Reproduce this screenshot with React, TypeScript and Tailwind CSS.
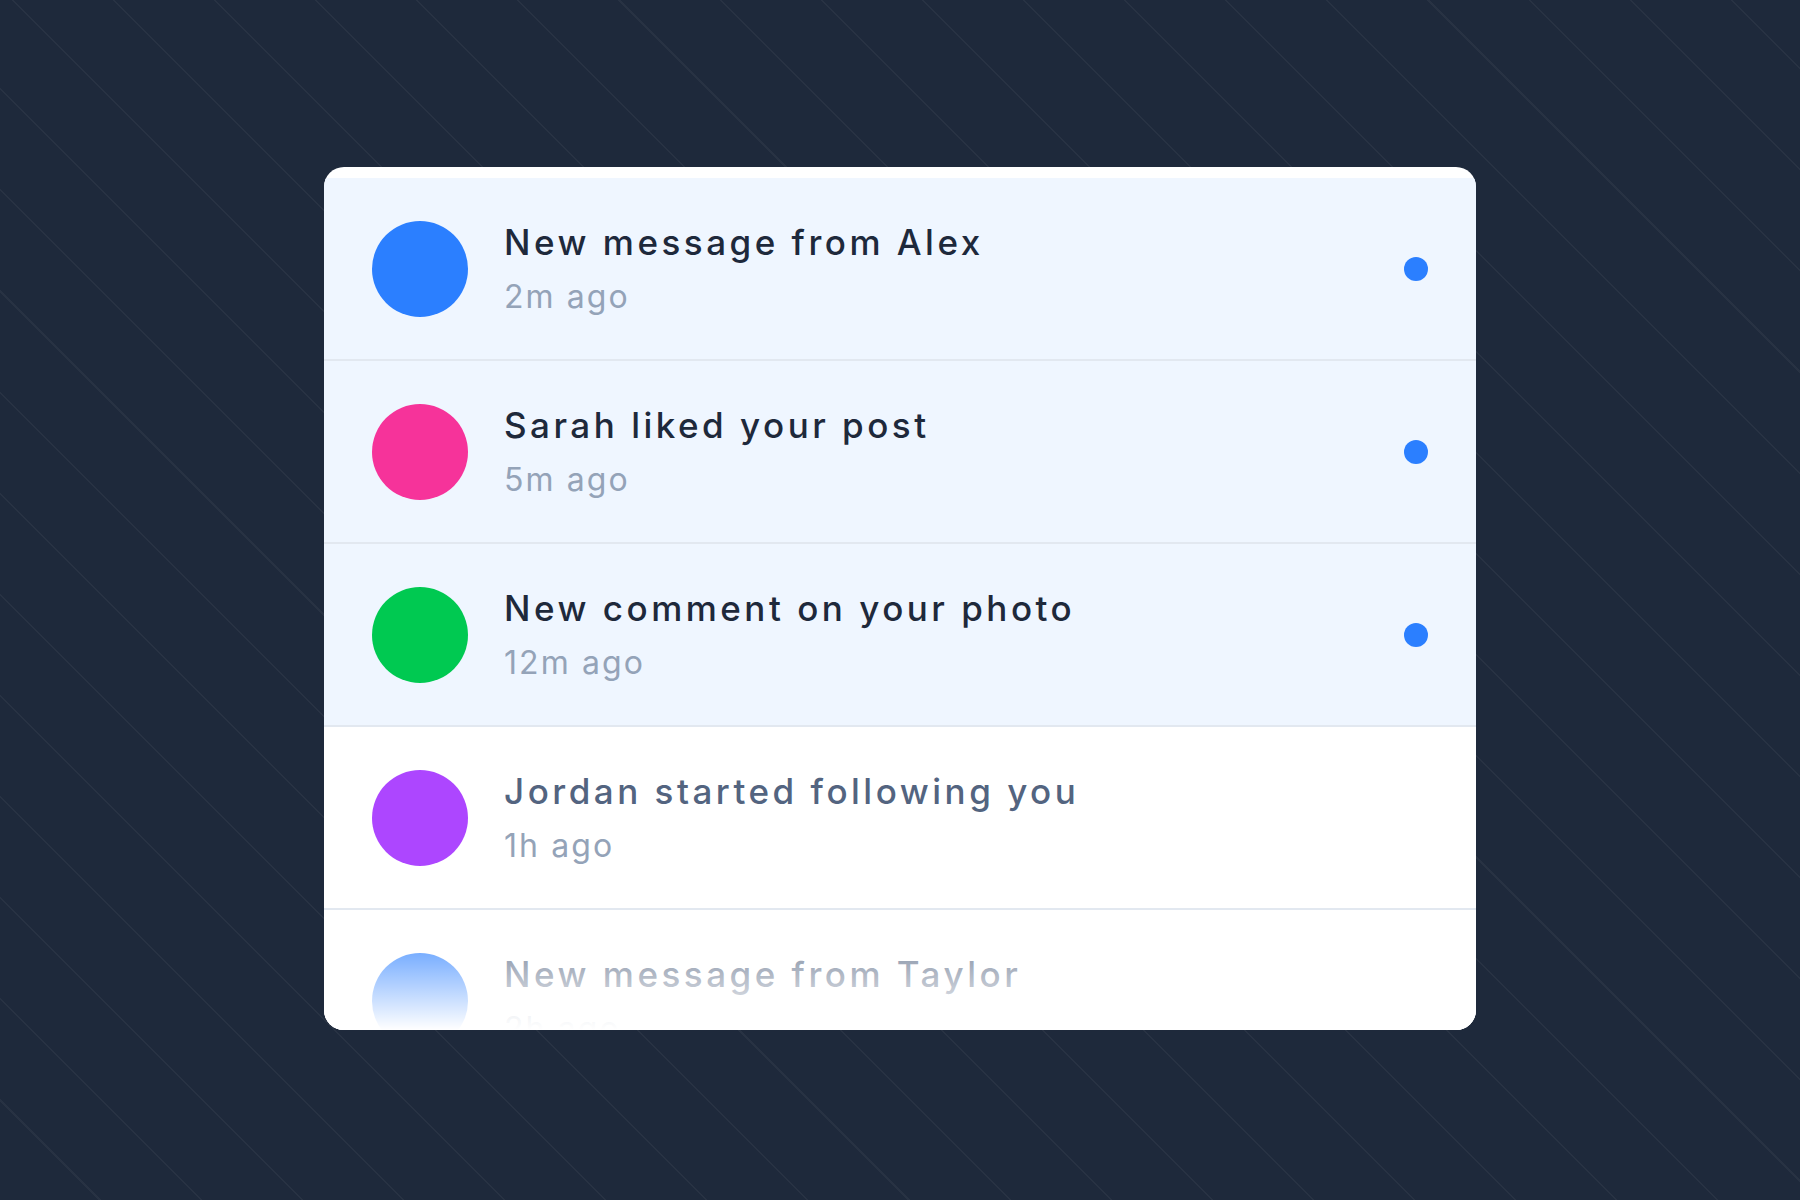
const NOTIFICATIONS = [
  { id: 1, title: "New message from Alex", time: "2m ago", color: "bg-blue-500", unread: true },
  { id: 2, title: "Sarah liked your post", time: "5m ago", color: "bg-pink-500", unread: true },
  { id: 3, title: "New comment on your photo", time: "12m ago", color: "bg-green-500", unread: true },
  { id: 4, title: "Jordan started following you", time: "1h ago", color: "bg-purple-500", unread: false },
  { id: 5, title: "New message from Taylor", time: "2h ago", color: "bg-blue-500", unread: false },
];

export default function App() {
  return (
    <div
      className="w-full h-[1200px] bg-[#1e293b] flex items-start justify-center pt-[167px]"
      style={{
        backgroundImage:
          "repeating-linear-gradient(45deg, transparent 0px, transparent 70px, rgba(255,255,255,0.045) 70px, rgba(255,255,255,0.045) 71.5px)",
        fontFamily: "Inter, 'Noto Sans', sans-serif",
      }}
    >
      <div className="relative w-[1152px] h-[863px] bg-white rounded-[20px] overflow-hidden pt-[11px]">
        {NOTIFICATIONS.map((n) => (
          <div
            key={n.id}
            className={`flex items-center px-12 py-[42.5px] border-b-2 border-[#e2e8f0] ${n.unread ? "bg-[#eff6ff]" : "bg-white"}`}
          >
            <div className={`w-24 h-24 rounded-full shrink-0 ${n.color}`}></div>
            <div className="flex flex-col gap-[16px] ml-9 flex-1">
              <span
                className={`text-[35px] leading-[40px] font-medium tracking-[0.1em] ${n.unread ? "text-[#1e293b]" : "text-[#536480]"}`}
              >
                {n.title}
              </span>
              <span className="text-[32px] leading-[38px] tracking-[0.065em] text-[#94a3b8]">{n.time}</span>
            </div>
            {n.unread && <div className="w-6 h-6 rounded-full bg-blue-500 shrink-0"></div>}
          </div>
        ))}
        <div className="absolute left-0 right-0 bottom-0 h-[122px] bg-gradient-to-b from-white/0 to-white"></div>
      </div>
    </div>
  );
}
